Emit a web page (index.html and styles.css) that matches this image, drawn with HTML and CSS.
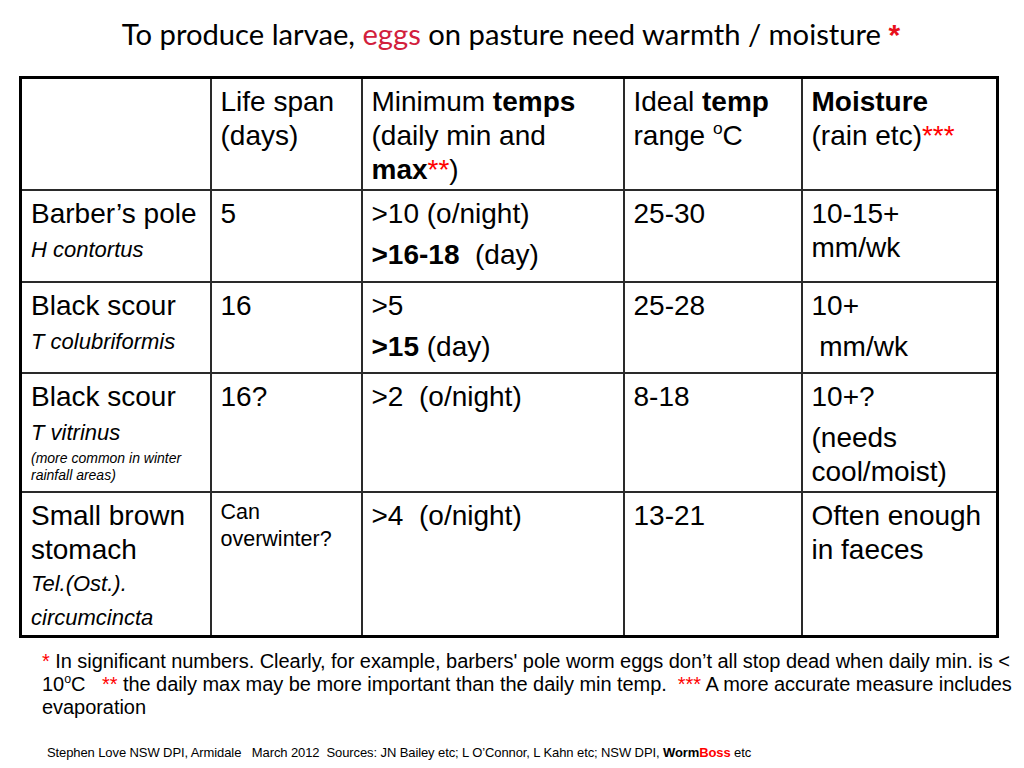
FILE: index.html
```html
<!DOCTYPE html>
<html>
<head>
<meta charset="utf-8">
<link rel="stylesheet" href="styles.css">
</head>
<body>
<div class="page">
  <h1 class="title">To produce larvae, <span class="eggs">eggs</span> on pasture need warmth / moisture <span class="star">*</span></h1>
  <table class="grid">
    <colgroup>
      <col class="c1"><col class="c2"><col class="c3"><col class="c4"><col class="c5">
    </colgroup>
    <tr class="r1">
      <td></td>
      <td><div class="ln">Life span</div><div class="ln">(days)</div></td>
      <td><div class="ln">Minimum <b>temps</b></div><div class="ln">(daily min and</div><div class="ln"><b>max</b><span class="red">**</span>)</div></td>
      <td><div class="ln">Ideal <b>temp</b></div><div class="ln">range <sup>o</sup>C</div></td>
      <td><div class="ln"><b>Moisture</b></div><div class="ln">(rain etc)<span class="red">***</span></div></td>
    </tr>
    <tr class="r2">
      <td><div class="ln">Barber’s pole</div><div class="sp first">H contortus</div></td>
      <td><div class="ln">5</div></td>
      <td><div class="ln">&gt;10 (o/night)</div><div class="ln para"><b>&gt;16-18</b>&nbsp; (day)</div></td>
      <td><div class="ln">25-30</div></td>
      <td><div class="ln">10-15+</div><div class="ln">mm/wk</div></td>
    </tr>
    <tr class="r3">
      <td><div class="ln">Black scour</div><div class="sp first">T colubriformis</div></td>
      <td><div class="ln">16</div></td>
      <td><div class="ln">&gt;5</div><div class="ln para"><b>&gt;15</b> (day)</div></td>
      <td><div class="ln">25-28</div></td>
      <td><div class="ln">10+</div><div class="ln para">&nbsp;mm/wk</div></td>
    </tr>
    <tr class="r4">
      <td><div class="ln">Black scour</div><div class="sp first">T vitrinus</div><div class="tiny">(more common in winter</div><div class="tiny">rainfall areas)</div></td>
      <td><div class="ln">16?</div></td>
      <td><div class="ln">&gt;2&nbsp; (o/night)</div></td>
      <td><div class="ln">8-18</div></td>
      <td><div class="ln">10+?</div><div class="ln para">(needs</div><div class="ln">cool/moist)</div></td>
    </tr>
    <tr class="r5">
      <td><div class="ln">Small brown</div><div class="ln">stomach</div><div class="sp">Tel.(Ost.).</div><div class="sp">circumcincta</div></td>
      <td><div class="sm">Can</div><div class="sm">overwinter?</div></td>
      <td><div class="ln">&gt;4&nbsp; (o/night)</div></td>
      <td><div class="ln">13-21</div></td>
      <td><div class="ln">Often enough</div><div class="ln">in faeces</div></td>
    </tr>
  </table>
  <div class="notes">
    <span class="red">*</span> In significant numbers. Clearly, for example, barbers' pole worm eggs don’t all stop dead when daily min. is &lt;<br>
    10<sup>o</sup>C&nbsp;&nbsp; <span class="red">**</span> the daily max may be more important than the daily min temp.&nbsp; <span class="red">***</span> A more accurate measure includes<br>
    evaporation
  </div>
  <div class="source">Stephen Love NSW DPI, Armidale &nbsp; March 2012&nbsp; Sources: JN Bailey etc; L O’Connor, L Kahn etc; NSW DPI, <b>Worm</b><b class="red">Boss</b> etc</div>
</div>
</body>
</html>
```

FILE: styles.css
```css
html, body {
  margin: 0;
  padding: 0;
  background: #ffffff;
}
.page {
  width: 1024px;
  height: 768px;
  overflow: hidden;
  font-family: "Liberation Sans", Arial, sans-serif;
  color: #000;
}
.title {
  margin: 0;
  height: 76px;
  padding-top: 14px;
  box-sizing: border-box;
  text-align: center;
  font-family: Lato, "Open Sans", sans-serif;
  font-weight: 400;
  font-size: 29.2px;
  line-height: 40px;
  padding-right: 2px;
}
.eggs { color: #d2203c; }
.star {
  color: #e8101c;
  font-family: "Liberation Sans", Arial, sans-serif;
  font-weight: 700;
  font-size: 30px;
}
.red { color: #ff0000; }
.grid {
  margin-left: 19px;
  width: 977px;
  table-layout: fixed;
  border-collapse: collapse;
  border: 3px solid #000;
}
.c1 { width: 190px; }
.c2 { width: 151px; }
.c3 { width: 262px; }
.c4 { width: 178px; }
.c5 { width: 196px; }
.grid td {
  border: 2px solid #2a2a2a;
  vertical-align: top;
  padding: 6px 6px 0 9px;
  box-sizing: border-box;
  overflow: hidden;
}
.r1 { height: 112px; }
.r2 { height: 92px; }
.r3 { height: 91px; }
.r4 { height: 119px; }
.r5 { height: 144px; }
.ln {
  font-size: 28px;
  line-height: 34px;
  white-space: nowrap;
}
.ln sup, .notes sup {
  font-size: 0.62em;
  line-height: 0;
  vertical-align: 0.62em;
}
.para { margin-top: 7px; }
.sp {
  font-style: italic;
  font-size: 22px;
  line-height: 34px;
  white-space: nowrap;
}
.sp.first { margin-top: 2px; }
.tiny {
  font-style: italic;
  font-size: 14px;
  line-height: 17px;
  white-space: nowrap;
}
.sm {
  font-size: 21.5px;
  line-height: 27px;
  white-space: nowrap;
}
.notes {
  padding: 12px 0 0 42px;
  font-size: 20px;
  line-height: 23px;
  letter-spacing: -0.05px;
  white-space: nowrap;
}
.source {
  padding: 26px 0 0 47px;
  font-size: 13px;
  line-height: 16px;
  letter-spacing: -0.1px;
  white-space: nowrap;
}
```
